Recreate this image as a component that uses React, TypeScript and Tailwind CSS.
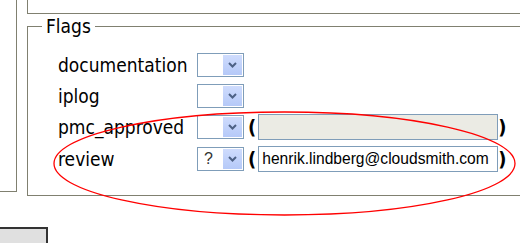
import React from "react";

const LINE = "border-[#808070]";

function Chevron() {
  return (
    <svg width="9" height="6" viewBox="0 0 9 6" className="block">
      <polyline points="1,1 4.5,4.5 8,1" fill="none" stroke="#4d6185" strokeWidth="2" />
    </svg>
  );
}

function Select({ value }: { value?: string }) {
  return (
    <div className="flex h-[24px] w-[47px] shrink-0 items-stretch border border-[#7f9db9] bg-white p-px">
      <div className="flex flex-1 items-center pl-[5px] text-[16px] leading-none text-[#333] [font-family:'Liberation_Sans',Arial,sans-serif]">
        {value}
      </div>
      <div className="flex w-[19px] items-center justify-center bg-gradient-to-b from-[#cfdcfd] to-[#b5c9f8]">
        <Chevron />
      </div>
    </div>
  );
}

function Paren({ children, className = "" }: { children: React.ReactNode; className?: string }) {
  return <span className={"text-[20px] font-semibold leading-none text-black " + className}>{children}</span>;
}

function Row({ label, value, input, className = "" }: { label: string; value?: string; input?: "disabled" | "email"; className?: string }) {
  return (
    <div className={"flex h-[26px] items-center " + className}>
      <div className="w-[139px] shrink-0 text-[19px] leading-[22px] text-black">{label}</div>
      <Select value={value} />
      {input && (
        <>
          <Paren className="ml-[4px]">(</Paren>
          <div
            className={
              "ml-[2px] flex h-[26px] w-[240px] shrink-0 items-center border border-[#7f9db9] pl-[3px] " +
              (input === "disabled" ? "bg-[#ebebe4]" : "bg-white")
            }
          >
            {input === "email" && (
              <span className="text-[15.6px] leading-none text-black [font-family:'Liberation_Sans',Arial,sans-serif]">
                henrik.lindberg@cloudsmith.com
              </span>
            )}
          </div>
          <Paren>)</Paren>
        </>
      )}
    </div>
  );
}

export default function App() {
  return (
    <div className="relative h-[243px] w-[520px] overflow-hidden bg-white [font-family:'DejaVu_Sans_Condensed','DejaVu_Sans',Verdana,sans-serif]">
      <div className="flex">
        <div className={"h-[192px] w-[17px] shrink-0 border-r border-b " + LINE} />
        <div className="ml-[10px] flex w-[600px] shrink-0 flex-col">
          <div className={"h-[14px] border-l border-b " + LINE} />
          <fieldset className={"mt-[1px] h-[181px] border pl-[14px] " + LINE}>
            <legend className="px-[4px] text-[19px] leading-[22px] text-black">Flags</legend>
            <div className="ml-[16px] flex flex-col gap-[5px] pt-[15px]">
              <Row label="documentation" />
              <Row label="iplog" />
              <Row label="pmc_approved" input="disabled" />
              <Row label="review" value="?" input="email" className="mt-px" />
            </div>
          </fieldset>
        </div>
      </div>
      <div className="mt-[31px] -ml-[2px] h-[30px] w-[50px] border-2 border-[#333] bg-[#e0e0e0]" />
      <svg className="pointer-events-none absolute inset-0" width="520" height="243">
        <ellipse cx="284.5" cy="163.5" rx="230.5" ry="51.5" fill="none" stroke="#ff0000" strokeWidth="1.3" />
      </svg>
    </div>
  );
}
